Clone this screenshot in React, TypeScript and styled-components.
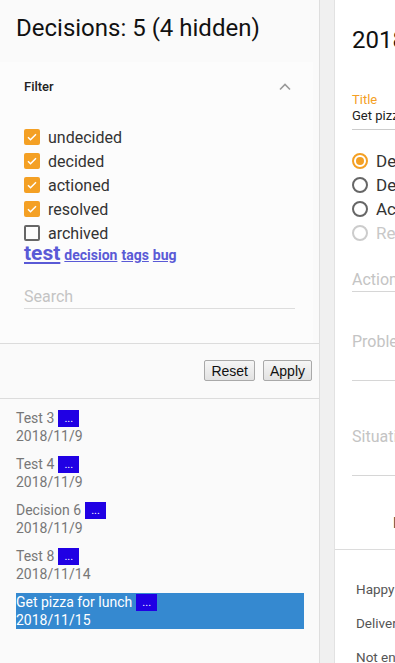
import styled, { createGlobalStyle } from "styled-components";

const GlobalStyle = createGlobalStyle`
  html, body {
    margin: 0;
    padding: 0;
    background: #ffffff;
  }
  body {
    font-family: Roboto, "Liberation Sans", sans-serif;
    overflow: hidden;
  }
`;

const ORANGE = "#f4a024";

const Page = styled.div`
  display: flex;
  width: 395px;
  height: 663px;
  overflow: hidden;
`;

const ListPanel = styled.div`
  flex: 0 0 318px;
  display: flex;
  flex-direction: column;
  background: #fafafa;
`;

const Heading = styled.h1`
  margin: 14px 16px 0;
  font-size: 24px;
  font-weight: 400;
  line-height: 28px;
  color: #111;
`;

const FilterCard = styled.div`
  margin: 20px 6px 0 0;
  background: #fcfcfc;
  padding-bottom: 34px;
`;

const FilterHeader = styled.div`
  height: 48px;
  display: flex;
  align-items: center;
  justify-content: space-between;
  padding: 0 21px 0 24px;
  font-size: 13px;
  font-weight: 500;
  color: #222;
`;

const FilterBody = styled.div`
  padding: 15px 18px 0 24px;
`;

const CheckRow = styled.label`
  display: flex;
  align-items: center;
  height: 24px;
  gap: 8px;
  font-size: 16px;
  color: #333;
`;

const Box = styled.span<{ checked: boolean }>`
  box-sizing: border-box;
  width: 16px;
  height: 16px;
  border-radius: 2px;
  display: flex;
  align-items: center;
  justify-content: center;
  background: ${(p) => (p.checked ? ORANGE : "transparent")};
  border: ${(p) => (p.checked ? "none" : "2px solid #666")};
`;

const Tags = styled.div`
  display: flex;
  align-items: baseline;
  gap: 4px;
  height: 20px;
  margin-top: -2px;
`;

const Tag = styled.a<{ big?: boolean }>`
  color: #5a5ad6;
  font-weight: 700;
  text-decoration: underline;
  font-size: ${(p) => (p.big ? "21px" : "14px")};
  line-height: 20px;
`;

const SearchField = styled.div`
  margin-top: 24px;
  width: 271px;
  border-bottom: 1px solid #ddd;
  padding-bottom: 1px;
  font-size: 16px;
  line-height: 20px;
  color: #c4c4c4;
`;

const ButtonBar = styled.div`
  display: flex;
  justify-content: flex-end;
  gap: 8px;
  padding: 16px 7px 17px 0;
  border-top: 1px solid #dcdcdc;
  border-bottom: 1px solid #dcdcdc;
`;

const PlainButton = styled.button`
  height: 21px;
  padding: 0 6px;
  font-family: "Liberation Sans", Arial, sans-serif;
  font-size: 14px;
  color: #111;
  background: linear-gradient(#f6f6f6, #e2e2e2);
  border: 1px solid #a9a9a9;
  border-radius: 2px;
`;

const ItemList = styled.div`
  display: flex;
  flex-direction: column;
  gap: 10px;
  padding: 10px 15px 0 16px;
`;

const Item = styled.div<{ selected?: boolean }>`
  font-size: 14px;
  line-height: 18px;
  color: ${(p) => (p.selected ? "#fff" : "#777")};
  background: ${(p) => (p.selected ? "#3589d0" : "transparent")};
`;

const TitleLine = styled.div`
  display: flex;
  align-items: center;
  gap: 4px;
`;

const MoreButton = styled.span`
  display: inline-flex;
  align-items: center;
  justify-content: center;
  width: 21px;
  height: 17px;
  background: #2000e4;
  color: #fff;
  font-size: 11px;
  line-height: 1;
`;

const Gutter = styled.div`
  flex: 0 0 14px;
  background: #f0f0f0;
  border-left: 1px solid #dedede;
  border-right: 1px solid #e2e2e2;
`;

const DetailPanel = styled.div`
  flex: 0 0 420px;
  display: flex;
  flex-direction: column;
  background: #fff;
`;

const DetailBody = styled.div`
  padding: 0 0 0 17px;
`;

const DetailTitle = styled.h2`
  margin: 26px 0 0;
  font-size: 24px;
  font-weight: 400;
  line-height: 28px;
  color: #111;
`;

const FieldLabel = styled.div`
  margin-top: 38px;
  font-size: 13px;
  line-height: 15px;
  color: ${ORANGE};
`;

const FieldValue = styled.div`
  font-size: 13px;
  line-height: 18px;
  color: #222;
  border-bottom: 1px solid #ccc;
  padding-bottom: 4px;
`;

const RadioGroup = styled.div`
  margin-top: 19px;
  display: flex;
  flex-direction: column;
`;

const RadioRow = styled.div<{ disabled?: boolean }>`
  display: flex;
  align-items: center;
  gap: 8px;
  height: 24px;
  font-size: 17px;
  color: ${(p) => (p.disabled ? "#c8c8c8" : "#333")};
`;

const Circle = styled.span<{ on?: boolean; disabled?: boolean }>`
  box-sizing: border-box;
  width: 16px;
  height: 16px;
  border-radius: 50%;
  border: 2px solid
    ${(p) => (p.on ? ORANGE : p.disabled ? "#ccc" : "#666")};
  display: flex;
  align-items: center;
  justify-content: center;
  &::after {
    content: "";
    width: 8px;
    height: 8px;
    border-radius: 50%;
    background: ${(p) => (p.on ? ORANGE : "transparent")};
  }
`;

const InputLine = styled.div<{ top: number; pad: number }>`
  margin-top: ${(p) => p.top}px;
  font-size: 16px;
  line-height: 20px;
  color: #c4c4c4;
  border-bottom: 1px solid #d6d6d6;
  padding-bottom: ${(p) => p.pad}px;
`;

const ActionRow = styled.div`
  margin-top: 37px;
  padding: 0 0 16px 58px;
  font-size: 14px;
  line-height: 20px;
  color: #444;
  border-bottom: 1px solid #dcdcdc;
`;

const OptionList = styled.div`
  display: flex;
  flex-direction: column;
  gap: 16px;
  padding: 30px 0 0 21px;
  font-size: 13.5px;
  line-height: 18px;
  color: #555;
`;

const statuses = [
  { label: "undecided", checked: true },
  { label: "decided", checked: true },
  { label: "actioned", checked: true },
  { label: "resolved", checked: true },
  { label: "archived", checked: false },
];

const decisions = [
  { title: "Test 3", date: "2018/11/9" },
  { title: "Test 4", date: "2018/11/9" },
  { title: "Decision 6", date: "2018/11/9" },
  { title: "Test 8", date: "2018/11/14" },
  { title: "Get pizza for lunch", date: "2018/11/15", selected: true },
];

const Check = () => (
  <svg width="12" height="12" viewBox="0 0 24 24">
    <path d="M4 12.5l5 5L20 6.5" fill="none" stroke="#fff" strokeWidth="3" />
  </svg>
);

const ChevronUp = () => (
  <svg width="14" height="9" viewBox="0 0 14 9">
    <path d="M2 7.5L7 2.5l5 5" fill="none" stroke="#9a9a9a" strokeWidth="1.6" />
  </svg>
);

export default function App() {
  return (
    <Page>
      <GlobalStyle />
      <ListPanel>
        <Heading>Decisions: 5 (4 hidden)</Heading>
        <FilterCard>
          <FilterHeader>
            <span>Filter</span>
            <ChevronUp />
          </FilterHeader>
          <FilterBody>
            {statuses.map((s) => (
              <CheckRow key={s.label}>
                <Box checked={s.checked}>{s.checked && <Check />}</Box>
                {s.label}
              </CheckRow>
            ))}
            <Tags>
              <Tag big>test</Tag>
              <Tag>decision</Tag>
              <Tag>tags</Tag>
              <Tag>bug</Tag>
            </Tags>
            <SearchField>Search</SearchField>
          </FilterBody>
        </FilterCard>
        <ButtonBar>
          <PlainButton>Reset</PlainButton>
          <PlainButton>Apply</PlainButton>
        </ButtonBar>
        <ItemList>
          {decisions.map((d) => (
            <Item key={d.title} selected={d.selected}>
              <TitleLine>
                {d.title}
                <MoreButton>...</MoreButton>
              </TitleLine>
              <div>{d.date}</div>
            </Item>
          ))}
        </ItemList>
      </ListPanel>
      <Gutter />
      <DetailPanel>
        <DetailBody>
          <DetailTitle>2018/11/15</DetailTitle>
          <FieldLabel>Title</FieldLabel>
          <FieldValue>Get pizza for lunch</FieldValue>
          <RadioGroup>
            <RadioRow>
              <Circle on />
              Deciding
            </RadioRow>
            <RadioRow>
              <Circle />
              Decided
            </RadioRow>
            <RadioRow>
              <Circle />
              Actioned
            </RadioRow>
            <RadioRow disabled>
              <Circle disabled />
              Resolved
            </RadioRow>
          </RadioGroup>
          <InputLine top={25} pad={1}>
            Action
          </InputLine>
          <InputLine top={40} pad={28}>
            Problem
          </InputLine>
          <InputLine top={46} pad={28}>
            Situation
          </InputLine>
        </DetailBody>
        <ActionRow>Delete</ActionRow>
        <OptionList>
          <div>Happy people</div>
          <div>Delivery is slow</div>
          <div>Not enough for everyone</div>
        </OptionList>
      </DetailPanel>
    </Page>
  );
}
